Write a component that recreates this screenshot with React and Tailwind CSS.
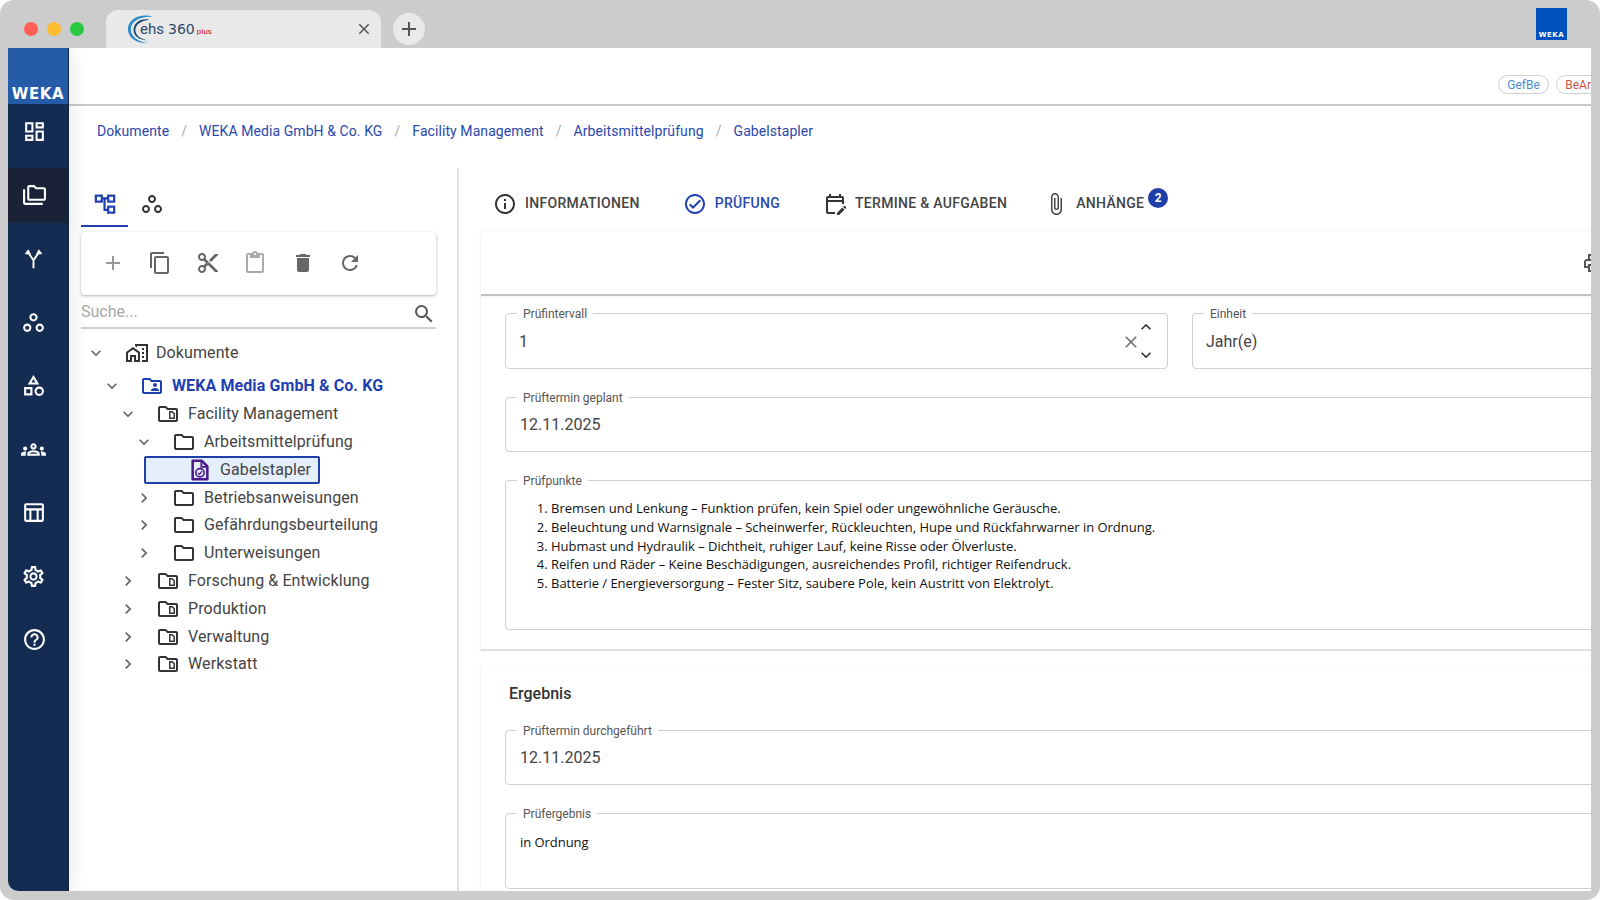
import React from 'react';
import {
  MdOutlineDashboard, MdOutlineFolderCopy, MdOutlineWorkspaces, MdOutlineCategory, MdOutlineGroups,
  MdOutlineTableChart, MdOutlineSettings, MdOutlineHelpOutline, MdOutlineContentCopy, MdOutlineContentCut,
  MdOutlineContentPaste, MdDelete, MdRefresh, MdAdd, MdSearch, MdOutlineHomeWork, MdOutlineFolderShared,
  MdOutlineSnippetFolder, MdOutlineFolder, MdKeyboardArrowDown, MdKeyboardArrowRight, MdKeyboardArrowUp,
  MdClose, MdOutlineInfo, MdOutlineCheckCircle, MdOutlineEditCalendar, MdAttachFile, MdOutlinePrint,
} from 'react-icons/md';

const ForkIcon = ({ className }) => (
  <svg viewBox="0 0 24 24" fill="none" stroke="currentColor" strokeWidth="2.200" className={className}>
    <path d="M12 23v-9L6.500 6M12 14l5.500-8" />
    <path d="M2.500 6.500L6 2l2.500 5zM15.500 7L18 2l3.500 4.500z" fill="currentColor" strokeWidth="0.800" />
  </svg>
);

const TreeIcon = ({ className }) => (
  <svg viewBox="0 0 24 24" fill="none" stroke="currentColor" strokeWidth="2.400" className={className}>
    <rect x="2" y="4" width="6.500" height="6.500" />
    <rect x="15.500" y="4" width="6.500" height="6.500" />
    <rect x="15.500" y="16" width="6.500" height="6.500" />
    <path d="M8.500 7h7M11.500 7v12.500h4" />
  </svg>
);

const DocCheckIcon = ({ className }) => (
  <svg viewBox="0 0 24 24" fill="none" stroke="currentColor" className={className}>
    <path d="M4 2h10l6 6v14H4z" strokeWidth="2.800" strokeLinejoin="round" />
    <path d="M13.500 2v6.500H20" strokeWidth="2" />
    <circle cx="12" cy="15" r="4.500" strokeWidth="1.800" />
    <path d="M9.800 15.200l1.700 1.500 2.800-3.400" strokeWidth="1.400" />
  </svg>
);

const sideItems = [
  { Icon: MdOutlineDashboard, edge: true },
  { Icon: MdOutlineFolderCopy, active: true, edge: true },
  { Icon: ForkIcon, small: true },
  { Icon: MdOutlineWorkspaces },
  { Icon: MdOutlineCategory },
  { Icon: MdOutlineGroups },
  { Icon: MdOutlineTableChart },
  { Icon: MdOutlineSettings },
  { Icon: MdOutlineHelpOutline, edge: true },
];

const crumbs = ['Dokumente', 'WEKA Media GmbH & Co. KG', 'Facility Management', 'Arbeitsmittelprüfung', 'Gabelstapler'];

const treeRows = [
  { label: 'WEKA Media GmbH & Co. KG', depth: 0, open: true, Icon: MdOutlineFolderShared, bold: true },
  { label: 'Facility Management', depth: 1, open: true, Icon: MdOutlineSnippetFolder },
  { label: 'Arbeitsmittelprüfung', depth: 2, open: true, Icon: MdOutlineFolder },
  { label: 'Gabelstapler', depth: 3, leaf: true, Icon: DocCheckIcon, selected: true },
  { label: 'Betriebsanweisungen', depth: 2, Icon: MdOutlineFolder },
  { label: 'Gefährdungsbeurteilung', depth: 2, Icon: MdOutlineFolder },
  { label: 'Unterweisungen', depth: 2, Icon: MdOutlineFolder },
  { label: 'Forschung & Entwicklung', depth: 1, Icon: MdOutlineSnippetFolder },
  { label: 'Produktion', depth: 1, Icon: MdOutlineSnippetFolder },
  { label: 'Verwaltung', depth: 1, Icon: MdOutlineSnippetFolder },
  { label: 'Werkstatt', depth: 1, Icon: MdOutlineSnippetFolder },
];

const pruefpunkte = [
  'Bremsen und Lenkung – Funktion prüfen, kein Spiel oder ungewöhnliche Geräusche.',
  'Beleuchtung und Warnsignale – Scheinwerfer, Rückleuchten, Hupe und Rückfahrwarner in Ordnung.',
  'Hubmast und Hydraulik – Dichtheit, ruhiger Lauf, keine Risse oder Ölverluste.',
  'Reifen und Räder – Keine Beschädigungen, ausreichendes Profil, richtiger Reifendruck.',
  'Batterie / Energieversorgung – Fester Sitz, saubere Pole, kein Austritt von Elektrolyt.',
];

const Field = ({ label, className, children }) => (
  <div className={`relative border-[1.5px] border-[#cfcfcf] rounded-[4px] ${className}`}>
    <span className="absolute left-[11px] -top-[8px] bg-white px-[6px] text-[12px] leading-[16px] text-[#555]">{label}</span>
    {children}
  </div>
);

const TreeRow = ({ row }) => {
  const { label, depth, open, leaf, Icon, bold, selected } = row;
  const margins = ['ml-0', 'ml-[16px]', 'ml-[32px]', 'ml-[48px]'];
  return (
    <div className={`flex items-center h-[27.8px] ${margins[depth]} pl-[23px]`}>
      <div className="w-[24px] flex justify-center text-[#666] shrink-0">
        {leaf ? null : open ? <MdKeyboardArrowDown className="w-[20px] h-[20px]" /> : <MdKeyboardArrowRight className="w-[20px] h-[20px]" />}
      </div>
      {selected ? (
        <div className="flex items-center h-[28px] w-[176px] -ml-[28px] pl-[43px] border-2 border-[#1f3fa8] rounded-[2px] bg-[#e5effb] shrink-0">
          <Icon className="w-[22px] h-[22px] text-[#4a1a8c] shrink-0" />
          <span className="ml-[9px] text-[#444]">{label}</span>
        </div>
      ) : (
        <>
          <Icon className={`ml-[16px] w-[24px] h-[24px] shrink-0 ${bold ? 'text-[#1f3fb0]' : 'text-[#333]'}`} />
          <span className={`ml-[8px] whitespace-nowrap ${bold ? 'font-bold text-[#1f3fb0]' : 'text-[#444]'}`}>{label}</span>
        </>
      )}
    </div>
  );
};

const App = () => {
  return (
    <div className="w-[1600px] h-[900px] overflow-hidden bg-white font-['Roboto',sans-serif]">
      <div className="h-full flex flex-col bg-[#cccccc] rounded-[14px]">
        {/* browser chrome */}
        <div className="h-[48px] flex items-end shrink-0">
          <div className="flex items-center gap-[9px] ml-[24px] mb-[12px]">
            <span className="w-[14px] h-[14px] rounded-full bg-[#ff5f57]" />
            <span className="w-[14px] h-[14px] rounded-full bg-[#febc2e]" />
            <span className="w-[14px] h-[14px] rounded-full bg-[#28c840]" />
          </div>
          <div className="ml-[22px] w-[275px] h-[38px] bg-[#e9e9e9] rounded-t-[12px] flex items-center pl-[21px] pr-[8px]">
            <svg viewBox="0 0 30 32" className="w-[28px] h-[32px] shrink-0">
              <path d="M28 3C14 -2 1 6 1 16c0 9 9 16 22 15C12 30 4 24 4 16 4 8 14 2 28 3z" fill="#2a8ac8" />
              <path d="M24 6C14 4 7 10 7 17c0 7 7 11 15 11C13 26 9 22 9 17c0-6 6-10 15-11z" fill="#1c4a70" />
            </svg>
            <span className="-ml-[15px] text-[15px] text-[#2c4a68] whitespace-nowrap">ehs</span>
            <span className="ml-[4px] text-[14px] text-[#2c4a68] font-['DejaVu_Sans',sans-serif] whitespace-nowrap">360</span>
            <span className="ml-[2px] mt-[5px] text-[8px] font-medium text-[#d2403f]">plus</span>
            <MdClose className="ml-auto w-[18px] h-[18px] text-[#555]" />
          </div>
          <div className="ml-[12px] mb-[3px] w-[32px] h-[32px] rounded-full bg-[#e9e9e9] flex items-center justify-center">
            <MdAdd className="w-[24px] h-[24px] text-[#555]" />
          </div>
          <div className="ml-auto mr-[33px] mb-[8px] w-[31px] h-[32px] bg-[#0050c0] flex items-end justify-center">
            <span className="text-[7px] leading-[10px] font-black tracking-[0.6px] text-white font-['DejaVu_Sans',sans-serif]">WEKA</span>
          </div>
        </div>

        {/* app window */}
        <div className="flex-1 min-h-0 flex ml-[8px] mr-[9px] mb-[9px] bg-white rounded-bl-[10px] overflow-hidden">
          <aside className="w-[61px] shrink-0 bg-[#152c52] flex flex-col border-r border-[#0e2244] z-10 shadow-[4px_0_16px_rgba(0,0,0,0.08)]">
            <div className="h-[56px] bg-[#255ca8] flex items-end justify-center pb-[2px]">
              <span className="text-[15px] leading-[15px] font-black tracking-[0.6px] text-white font-['DejaVu_Sans',sans-serif]">WEKA</span>
            </div>
            <div className="flex flex-col gap-[8.500px]">
              {sideItems.map(({ Icon, active, small, edge }, i) => (
                <div key={i} className={`h-[55px] flex items-center justify-center text-white ${edge ? 'pr-[7px]' : 'pr-[9px]'} ${active ? 'bg-[#1a2238]' : ''}`}>
                  <Icon className={small ? 'w-[21px] h-[21px]' : 'w-[25px] h-[25px]'} />
                </div>
              ))}
            </div>
          </aside>

          <main className="flex-1 min-w-0 flex flex-col overflow-hidden">
            <header className="h-[58px] shrink-0 border-b-2 border-[#c8c8c8] flex items-end justify-end pb-[10px] pl-[20px]">
              <div className="flex gap-[7px] -mr-[16px]">
                <span className="h-[19px] w-[51px] flex items-center justify-center rounded-full border-[1.5px] border-[#cfcfcf] text-[12px] text-[#4a8ccc]">GefBe</span>
                <span className="h-[19px] w-[51px] flex items-center justify-center rounded-full border-[1.5px] border-[#cfcfcf] text-[12px] text-[#cc5540]">BeArb</span>
              </div>
            </header>

            <nav className="h-[50px] shrink-0 flex items-center pl-[28px] text-[14px] tracking-[0.08px] text-[#2a48b0]">
              {crumbs.map((c, i) => (
                <React.Fragment key={c}>
                  {i > 0 && <span className="mx-[12px] text-[#aaa]">/</span>}
                  <span>{c}</span>
                </React.Fragment>
              ))}
            </nav>

            <div className="flex-1 min-h-0 flex mt-[12px]">
              {/* tree panel */}
              <section className="w-[390px] shrink-0 border-r-2 border-[#e2e2e2] pl-[12px] pr-[21px]">
                <div className="h-[59px] flex">
                  <div className="w-[47px] flex items-center justify-center pt-[12px] border-b-2 border-[#1f3fb0] text-[#1f3fb0]">
                    <TreeIcon className="w-[22px] h-[22px]" />
                  </div>
                  <div className="w-[47px] flex items-center justify-center pt-[12px] text-[#333]">
                    <MdOutlineWorkspaces className="w-[24px] h-[24px]" />
                  </div>
                </div>
                <div className="mt-[5px] h-[63px] flex items-center pl-[8px] pb-[2px] rounded-[4px] shadow-[0_1px_3px_rgba(0,0,0,0.3)] text-[#666]">
                  <div className="w-[47.500px] flex justify-center"><MdAdd className="w-[24px] h-[24px] text-[#999]" /></div>
                  <div className="w-[47.500px] flex justify-center"><MdOutlineContentCopy className="w-[24px] h-[24px]" /></div>
                  <div className="w-[47.500px] flex justify-center"><MdOutlineContentCut className="w-[24px] h-[24px]" /></div>
                  <div className="w-[47.500px] flex justify-center"><MdOutlineContentPaste className="w-[24px] h-[24px] text-[#aaa]" /></div>
                  <div className="w-[47.500px] flex justify-center"><MdDelete className="w-[24px] h-[24px]" /></div>
                  <div className="w-[47.500px] flex justify-center"><MdRefresh className="w-[24px] h-[24px]" /></div>
                </div>
                <div className="mt-[5px] h-[29px] flex items-center justify-between border-b-2 border-[#cfcfcf]">
                  <span className="text-[16px] text-[#a8a8a8] -mt-[4px]">Suche...</span>
                  <MdSearch className="w-[24px] h-[24px] text-[#555]" />
                </div>
                <div className="mt-[10px] text-[16px] tracking-[0.1px] -ml-[4px]">
                  <div className="flex items-center h-[28px] mb-[5.500px] pl-[7px]">
                    <div className="w-[24px] flex justify-center text-[#666]"><MdKeyboardArrowDown className="w-[20px] h-[20px]" /></div>
                    <MdOutlineHomeWork className="ml-[17px] w-[24px] h-[24px] text-[#333]" />
                    <span className="ml-[7px] text-[#444]">Dokumente</span>
                  </div>
                  {treeRows.map((row) => <TreeRow key={row.label} row={row} />)}
                </div>
              </section>

              {/* detail panel */}
              <section className="flex-1 min-w-0 pl-[22px]">
                <div className="h-[63px] flex items-center pt-[8px] text-[14px] font-medium tracking-[0.3px] text-[#444] whitespace-nowrap">
                  <MdOutlineInfo className="ml-[12px] w-[24px] h-[24px] text-[#333]" />
                  <span className="ml-[8px]">INFORMATIONEN</span>
                  <MdOutlineCheckCircle className="ml-[43px] w-[24px] h-[24px] text-[#1f3fb0]" />
                  <span className="ml-[8px] text-[#2a48b0]">PRÜFUNG</span>
                  <MdOutlineEditCalendar className="ml-[43px] w-[24px] h-[24px] text-[#333]" />
                  <span className="ml-[8px]">TERMINE &amp; AUFGABEN</span>
                  <MdAttachFile className="ml-[37px] w-[24px] h-[24px] text-[#444]" />
                  <span className="ml-[8px]">ANHÄNGE</span>
                  <span className="ml-[4px] -mt-[12px] w-[20px] h-[20px] rounded-full bg-[#1f3fa8] text-white text-[12px] font-bold flex items-center justify-center tracking-normal">2</span>
                </div>
                <div className="h-[65px] rounded-tl-[4px] border-b-2 border-[#c4c4c4] shadow-[0_0_3px_rgba(0,0,0,0.1)] flex items-center justify-end">
                  <MdOutlinePrint className="w-[24px] h-[24px] text-[#555] -mr-[15px]" />
                </div>
                <div className="pl-[24px] pt-[17px] pb-[19px] border-b-2 border-[#e0e0e0] shadow-[-1px_0_2px_rgba(0,0,0,0.06)]">
                  <div className="flex gap-[24px] w-[1300px]">
                    <Field label="Prüfintervall" className="w-[663px] h-[56px] shrink-0 flex items-center pl-[13px] pt-[2px] text-[16px] text-[#444]">
                      1
                      <MdClose className="ml-auto -mr-[5px] w-[20px] h-[20px] text-[#777]" />
                      <div className="flex flex-col gap-[8px] mr-[11px] -mt-[2px] text-[#333]">
                        <MdKeyboardArrowUp className="w-[20px] h-[20px]" />
                        <MdKeyboardArrowDown className="w-[20px] h-[20px]" />
                      </div>
                    </Field>
                    <Field label="Einheit" className="w-[600px] h-[56px] shrink-0 flex items-center pl-[13px] pt-[2px] text-[16px] text-[#444]">
                      Jahr(e)
                    </Field>
                  </div>
                  <Field label="Prüftermin geplant" className="mt-[28px] w-[1300px] h-[55px] flex items-center pl-[14px] text-[16px] text-[#444]">
                    12.11.2025
                  </Field>
                  <Field label="Prüfpunkte" className="mt-[28px] w-[1300px] h-[150px]">
                    <ol className="list-decimal pl-[45px] pt-[18px] text-[13px] tracking-[-0.02px] leading-[18.800px] text-[#111] font-['Open_Sans',sans-serif]">
                      {pruefpunkte.map((p) => <li key={p}>{p}</li>)}
                    </ol>
                  </Field>
                </div>
                <div className="mt-[14px] pl-[24px] pt-[21px] shadow-[-1px_0_2px_rgba(0,0,0,0.06)] h-[300px]">
                  <h3 className="pl-[4px] text-[16px] leading-[16px] font-medium text-[#333]">Ergebnis</h3>
                  <Field label="Prüftermin durchgeführt" className="mt-[28px] w-[1300px] h-[55px] flex items-center pl-[14px] text-[16px] text-[#444]">
                    12.11.2025
                  </Field>
                  <Field label="Prüfergebnis" className="mt-[28px] w-[1300px] h-[76px] pl-[14px] pt-[19px]">
                    <p className="text-[13px] leading-[18px] tracking-[-0.05px] text-[#111] font-['Open_Sans',sans-serif]">in Ordnung</p>
                  </Field>
                </div>
              </section>
            </div>
          </main>
        </div>
      </div>
    </div>
  );
};

export default App;
